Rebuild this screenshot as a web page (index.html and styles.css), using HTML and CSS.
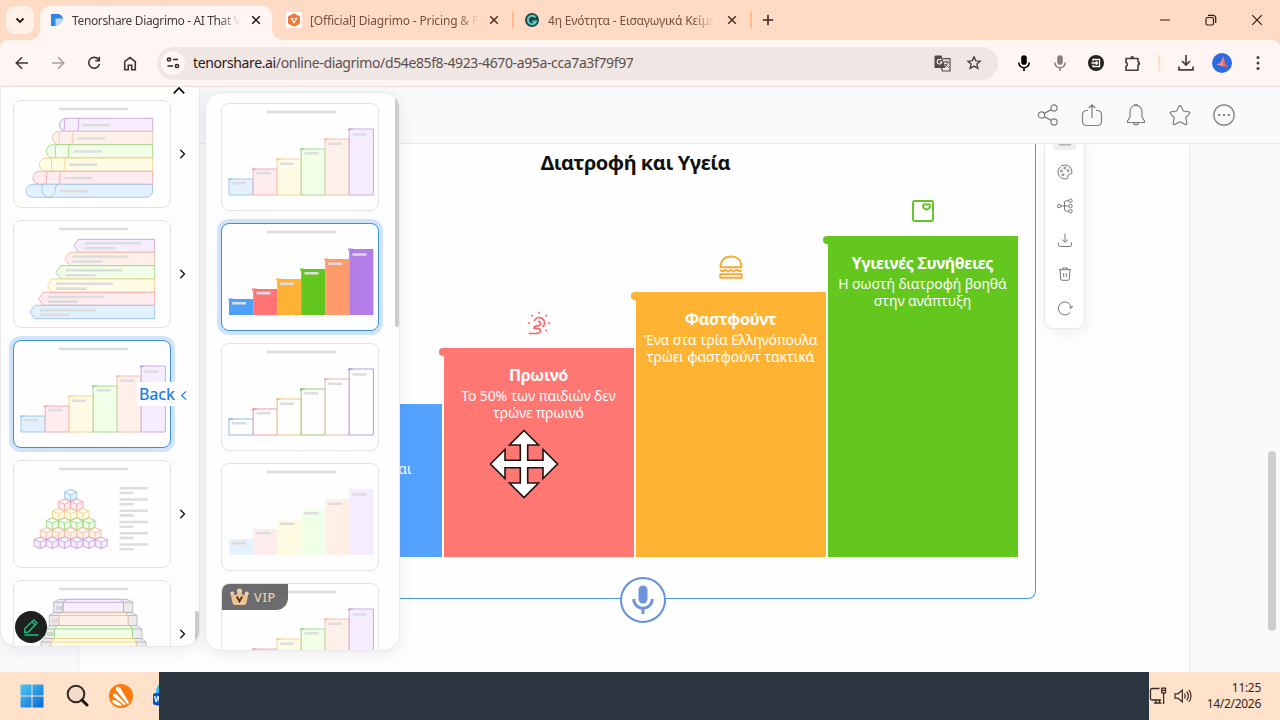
FILE: index.html
```html
<!DOCTYPE html>
<html lang="el">
<head>
<meta charset="utf-8">
<title>Tenorshare Diagrimo</title>
<link rel="stylesheet" href="styles.css">
</head>
<body>
<svg class="defs" width="0" height="0">
  <symbol id="close" viewBox="0 0 10 10"><path d="M1.2 1.2 8.8 8.8M8.8 1.2 1.2 8.8" fill="none" stroke="currentColor" stroke-width="1.5"/></symbol>
  <symbol id="mic" viewBox="0 0 16 20"><rect x="4.8" y="1" width="6.4" height="11" rx="3.2" fill="currentColor"/><path d="M2 9.5a6 6 0 0 0 12 0M8 15.5V19" fill="none" stroke="currentColor" stroke-width="1.8"/></symbol>
  <symbol id="chev" viewBox="0 0 8 12"><path d="M1.800 1.800 6 6 1.800 10.200" fill="none" stroke="currentColor" stroke-width="1.300"/></symbol>
  <symbol id="stairs" viewBox="0 0 158 108">
    <path class="line" d="M46 9h69"/>
    <g transform="translate(0 .5)">
    <path class="c1" d="M8 75.5h24.2V91.5H8z"/><path class="c2" d="M32.2 65.5h24V91.5h-24z"/><path class="c3" d="M56.2 55.5h24V91.5h-24z"/>
    <path class="c4" d="M80.2 45.5h24V91.5h-24z"/><path class="c5" d="M104.2 35.5h24V91.5h-24z"/><path class="c6" d="M128.2 25.5h24.2V91.5h-24.2z"/>
    <path class="n1" d="M8 76.5v-1h4"/><path class="n2" d="M31.6 67v-1.5h4"/><path class="n3" d="M55.6 57v-1.5h4"/><path class="n4" d="M79.6 47v-1.5h4"/><path class="n5" d="M103.6 37v-1.5h4"/><path class="n6" d="M127.6 27v-1.5h4"/>
    <path class="line" d="M11 79.8h14M35.5 69.6h14M59 60.2h14M83.5 49.8h14M107 40.2h14M131.5 31h14"/>
    </g>
  </symbol>
  <symbol id="cube" viewBox="0 0 12.4 12.2" overflow="visible"><path d="M6.2.3 12.2 3v6.4l-6 2.6-6-2.6V3zM.2 3l6 2.6 6-2.6M6.2 5.6V12"/></symbol>
</svg>

<div class="tabs">
  <div class="tabsearch"><svg width="10" height="7" viewBox="0 0 10 7"><path d="M1.5 1.5 5 5l3.500-3.500" fill="none" stroke="#1f1713" stroke-width="1.8"/></svg></div>
  <div class="tab active">
    <svg class="fav" width="14" height="14" viewBox="0 0 14 14"><path d="M1 1h6.500c3.500 0 5.500 2.500 5.500 5.500L6.500 13H1z" fill="#2f86e8"/><path d="M5.500 5.500h7.400C12.500 10 10 12.500 5.500 13z" fill="#bcdcff"/></svg>
    <span class="tabname">Tenorshare Diagrimo - AI That V</span>
    <svg class="x" width="10" height="10"><use href="#close"/></svg>
  </div>
  <div class="tab second">
    <svg class="fav" width="16" height="16" viewBox="0 0 16 16"><path d="M0 0h16v16H0z" fill="#fff"/><path d="m8 1.300 6 3.300v6.800l-6 3.300-6-3.300V4.600z" fill="#f07a35"/><path d="M4.500 6h7L8 12z" fill="#fff"/><circle cx="8" cy="7.600" r="1.300" fill="#f07a35"/></svg>
    <span class="tabname">[Official] Diagrimo - Pricing &amp; P</span>
    <svg class="x" width="10" height="10"><use href="#close"/></svg>
  </div>
  <div class="tab third">
    <svg class="fav" width="14" height="14" viewBox="0 0 14 14"><circle cx="7" cy="7" r="7" fill="#174a4a"/><path d="M10.500 4.500A4.200 4.200 0 1 0 11 8.500H7.500" fill="none" stroke="#69c9ba" stroke-width="2"/></svg>
    <span class="tabname">4η Ενότητα - Εισαγωγικά Κείμε</span>
    <svg class="x" width="10" height="10"><use href="#close"/></svg>
  </div>
  <div class="newtab"><svg width="12" height="12" viewBox="0 0 12 12"><path d="M6 .8v10.400M.8 6h10.400" stroke="#3b2a20" stroke-width="1.600"/></svg></div>
  <div class="winctl">
    <svg width="46" height="20" viewBox="0 0 46 20"><path d="M18 10h10" stroke="#2a1d16"/></svg>
    <svg width="46" height="20" viewBox="0 0 46 20"><g fill="none" stroke="#2a1d16" stroke-width="1.200"><rect x="18" y="7.500" width="7.500" height="7.500" rx="1.500"/><path d="M20 5.400h5.200a2.500 2.500 0 0 1 2.500 2.500V13"/></g></svg>
    <svg width="46" height="20" viewBox="0 0 46 20"><path d="m18.200 5.200 9.600 9.600m0-9.600-9.600 9.600" stroke="#2a1d16" stroke-width="1.200"/></svg>
  </div>
</div>

<div class="toolbar">
  <div class="btn"><svg width="14" height="14" viewBox="0 0 14 14"><path d="M13 7H1.500M7 1.300 1.300 7 7 12.700" fill="none" stroke="#433631" stroke-width="1.600"/></svg></div>
  <div class="btn"><svg width="14" height="14" viewBox="0 0 14 14"><path d="M1 7h11.500M7 1.300 12.700 7 7 12.700" fill="none" stroke="#aba19e" stroke-width="1.600"/></svg></div>
  <div class="btn"><svg width="14" height="14" viewBox="0 0 14 14"><path d="M11.800 4A5.400 5.400 0 1 0 12.400 8M12.300.8v4H8.200" fill="none" stroke="#433631" stroke-width="1.600"/></svg></div>
  <div class="btn"><svg width="14" height="15" viewBox="0 0 14 15"><path d="M1.700 5.700 7 1.600l5.300 4.100v8H8.700V9.200H5.300v4.500H1.700z" fill="none" stroke="#433631" stroke-width="1.600"/></svg></div>
  <div class="omnibox">
    <div class="site"><svg width="14" height="12" viewBox="0 0 14 12"><g fill="none" stroke="#2f2522" stroke-width="1.500"><circle cx="3" cy="2.500" r="1.600"/><path d="M7 2.500h5M1.500 9H7"/><circle cx="11" cy="9" r="1.600"/></g></svg></div>
    <div class="url"><b>tenorshare.ai</b>/online-diagrimo/d54e85f8-4923-4670-a95a-cca7a3f79f97</div>
    <div class="oi"><svg width="17" height="17" viewBox="0 0 17 17"><path d="M1.500.5h6l4 12.500h-10A1 1 0 0 1 .5 12V1.500a1 1 0 0 1 1-1z" fill="#54484a"/><path d="M7.500 5.200A2.400 2.400 0 1 0 7.900 7H5.700" fill="none" stroke="#fff" stroke-width="1.100"/><path d="M9 3.700h7V16H8.500L7.500 13" fill="none" stroke="#54484a" stroke-width="1.200"/><path d="M9.500 7h5.500M12.200 5.500V7M14 7c-.5 2.500-2 4-3.500 5M11 9l3.500 3.500" fill="none" stroke="#54484a"/></svg></div>
    <div class="oi"><svg width="16" height="16" viewBox="0 0 16 16"><path d="m8 1.800 1.800 4 4.400.4-3.300 2.900 1 4.300L8 11.100l-3.900 2.300 1-4.300-3.300-2.900 4.400-.4z" fill="none" stroke="#453a37" stroke-width="1.300"/></svg></div>
  </div>
  <div class="btn ext"><svg width="14" height="18"><use href="#mic"/></svg></div>
  <div class="btn ext dim"><svg width="14" height="18"><use href="#mic"/></svg></div>
  <div class="btn"><svg width="16" height="16" viewBox="0 0 16 16"><circle cx="8" cy="8" r="8" fill="#242122"/><path d="M5 6.300V4.500h6.500v7H5V9.700M3.500 8h5.700M7.800 6.300 9.500 8 7.800 9.700" fill="none" stroke="#fff" stroke-width="1.300"/></svg></div>
  <div class="btn"><svg width="17" height="17" viewBox="0 0 17 17"><path d="M2 3.500h12v3.200a1.900 1.900 0 0 1 0 3.600v5H2v-4a2 2 0 0 0 0-3.800z" fill="none" stroke="#4a3c37" stroke-width="1.600" stroke-linejoin="round"/><path d="M6.300 3a1.900 1.900 0 0 1 3.800 0zM14 6.500a2 2 0 0 1 0 4z" fill="#4a3c37"/></svg></div>
  <div class="vsep"></div>
  <div class="btn"><svg width="16" height="16" viewBox="0 0 16 16"><path d="M8 0v10M4 6l4 4 4-4M1 11.500v3.300h14v-3.300" fill="none" stroke="#4a3c37" stroke-width="1.700"/></svg></div>
  <div class="btn"><svg width="20" height="20" viewBox="0 0 20 20"><circle cx="10" cy="10" r="10" fill="#2b6be4"/><path d="M11.500 3.500 13.500 11l3 3.500-5.500-1.200-6.500-1.800 4-1.500z" fill="#f0645c"/><path d="M11.500 3.500 11 13.300 4.500 11.500l4-1.500z" fill="#ff8d78"/></svg></div>
  <div class="btn"><svg width="4" height="16" viewBox="0 0 4 16"><g fill="#4a3c37"><circle cx="2" cy="2.500" r="1.500"/><circle cx="2" cy="8" r="1.500"/><circle cx="2" cy="13.500" r="1.500"/></g></svg></div>
</div>

<div class="content">
  <div class="apphead">
    <svg viewBox="0 0 22 22"><circle cx="4.500" cy="11" r="3.100"/><circle cx="17" cy="4" r="3.100"/><circle cx="17" cy="18" r="3.100"/><path d="m7.200 9.400 7-3.800M7.200 12.600l7 3.800"/></svg>
    <svg viewBox="0 0 22 22"><path d="M7 6.500H5.500A4 4 0 0 0 1.500 10.500v7a4 4 0 0 0 4 4h11a4 4 0 0 0 4-4v-7a4 4 0 0 0-4-4H15M11 14V.8M7.800 4 11 .8 14.200 4"/></svg>
    <svg viewBox="0 0 22 22"><path d="M11 1.500c-4 0-6 3-6 6.500v5L2.500 17v1.500h17V17L17 13V8c0-3.500-2-6.500-6-6.500zM8.500 19a2.600 2.600 0 0 0 5 0M9.500 1.500a1.500 1.500 0 0 1 3 0"/></svg>
    <svg viewBox="0 0 22 22"><path d="M10 2.200a1.100 1.100 0 0 1 2 0L14.300 7l5.600.8a1 1 0 0 1 .6 1.800L16.800 13.500l1 5.800a1 1 0 0 1-1.600 1.100L11 17.800l-5.200 2.600a1 1 0 0 1-1.600-1.100l1-5.800L1.500 9.600a1 1 0 0 1 .6-1.800L7.700 7z" stroke-linejoin="round"/></svg>
    <svg viewBox="0 0 22 22"><circle cx="11" cy="11" r="10.200"/><path d="M5.200 11h2M10 11h2M14.800 11h2" stroke-width="1.800"/></svg>
  </div>
  <div class="stage">
    <div class="paper">
      <div class="frame">
        <h1>Διατροφή και Υγεία</h1>
        <div class="chart">
          <div class="col"><div class="bar b1"><p class="cut">Η διατροφή είναι</p></div></div>
          <div class="col">
            <svg class="ico i2" viewBox="0 0 24 24"><path d="M7.200 10.200A5.300 5.300 0 1 1 15.500 16M12 2.800V.8M5.500 5.300 4.200 4M18.500 5.300 19.800 4M3 12H.8M21 12h2.200M18.500 18.700l1.300 1.300M1.500 22.500h7c4 0 5-1.300 5-2.700 0-2.300-2-2.500-4-2.500H7c.2-2 1.500-2.500 3.500-2.500 2.200 0 3-.8 3-2.300 0-1.300-1-2.200-2.500-2"/></svg>
            <div class="bar b2"><h2>Πρωινό</h2><p>Το 50% των παιδιών δεν<br>τρώνε πρωινό</p></div>
          </div>
          <div class="col">
            <svg class="ico i3" viewBox="0 0 24 24"><path d="M1.500 12.200C1.500 5.500 5.500 1.500 12 1.500s10.500 4 10.500 10.700zM1 15.500l3 .7 2.500-1.400 2.700 1.900 2.800-1.900 2.800 1.900 2.700-1.900 2.500 1.400 3-.7M1.300 19.300h21.400v3.500H1.300z"/></svg>
            <div class="bar b3"><h2>Φαστφούντ</h2><p>Ένα στα τρία Ελληνόπουλα<br>τρώει φαστφούντ τακτικά</p></div>
          </div>
          <div class="col">
            <svg class="ico i4" viewBox="0 0 24 24"><rect x="2" y="2" width="20" height="20" rx="1.500"/><path d="M12 7c0-2.200 2.300-2 3.500-1.200C16.700 5 19 4.800 19 7c0 2-2 3.200-3.500 3.700C14 10.200 12 9 12 7z"/></svg>
            <div class="bar b4"><h2>Υγιεινές Συνήθειες</h2><p>Η σωστή διατροφή βοηθά<br>στην ανάπτυξη</p></div>
          </div>
        </div>
        <div class="voice"><svg width="24" height="32" viewBox="0 0 24 32"><rect x="7.500" y="1.500" width="9" height="18" rx="4.500" fill="#6c93dc"/><path d="M2.700 15a9.300 9.300 0 0 0 18.600 0M12 24.500V30" fill="none" stroke="#6c93dc" stroke-width="2.900"/></svg></div>
      </div>
      <div class="side">
        <div class="sel"></div>
        <svg viewBox="0 0 16 16"><path d="M15 8A7 7 0 1 0 10 14.700c1.500-.5.500-2.500.8-3.500.5-1.500 4.200-.2 4.200-3.200z"/><circle cx="7.800" cy="4" r="1"/><circle cx="4.500" cy="7" r="1"/><circle cx="11.200" cy="6.500" r="1"/><circle cx="6" cy="10.800" r="1"/></svg>
        <svg viewBox="0 0 16 16"><circle cx="2.200" cy="8" r="1.700"/><circle cx="13.500" cy="2.800" r="1.700"/><circle cx="13.500" cy="8" r="1.700"/><circle cx="13.500" cy="13.200" r="1.700"/><path d="M4 8h7.800M11.800 2.800H9.500A2 2 0 0 0 7.500 5v6a2 2 0 0 0 2 2.200h2.300"/></svg>
        <svg viewBox="0 0 16 16"><path d="M8 1.500v8.700M5 7.500l3 2.800 3-2.800M1.500 10.500v2a2 2 0 0 0 2 2h9a2 2 0 0 0 2-2v-2"/></svg>
        <svg viewBox="0 0 16 16"><path d="M2 3.700h12M5 3.700 5.800 2h4.400l.8 1.700M3 3.700l.7 9.300a1.500 1.500 0 0 0 1.500 1.300h5.600a1.500 1.500 0 0 0 1.500-1.300L13 3.700M6.700 7v4M9.300 7v4"/></svg>
        <svg viewBox="0 0 16 16"><path d="M13.300 12A6.500 6.500 0 1 1 14.300 7.500M12 7l2.400 1.300L15.500 6"/></svg>
      </div>
    </div>
  </div>

  <div class="pagescroll"></div>

  <div class="panel left">
    <svg class="up" width="14" height="9" viewBox="0 0 14 9"><path d="M1.800 7.300 7 2l5.200 5.300" fill="none" stroke="#000" stroke-width="1.700"/></svg>
    <div class="row">
      <div class="card"><svg viewBox="0 0 158 108" class="pastel">
        <path class="line" d="M46 9h69"/>
        <path class="c6" d="M53 18.300h86.700v13H53a6.500 6.500 0 0 1 0-13zM53 18.300q-1.500 1-1.500 4v5q0 3-2 4M66.500 18.300q-1 1-1 4v5q0 3-1.500 4"/>
        <path class="c5" d="M46 31.300h93.700v13.400H46a6.700 6.700 0 0 1 0-13.400zM47.800 31.300q-1.500 1-1.500 4v5q0 3 1.500 4.400M61.500 31.300q-1.500 1-1.500 4v5q0 3-2 4.400"/>
        <path class="c4" d="M40 44.700h99.700V58H40a6.650 6.650 0 0 1 0-13.300zM44 44.700q-1.700 1-1.700 4v5q0 3 1.500 4.300M57 44.700q-1.300 1-1.300 4v5q0 3-2 4.300"/>
        <path class="c3" d="M33 58h106.700v13.300H33A6.650 6.650 0 0 1 33 58zM36.500 58q2 1 2 4v5q0 3-2 4.300M53 58q-1.300 1-1.300 4v5q0 3-2 4.300"/>
        <path class="c2" d="M26.500 71.300h113.200v13H26.500a6.500 6.500 0 0 1 0-13zM35 71.300q-1.500 1-1.500 4v5q0 3-2 4M48.500 71.300q-1.500 1-1.500 4v5q0 3-2 4"/>
        <path class="c1" d="M19.500 84.300h120.200v6.500a6.500 6.500 0 0 1-6.500 6.500H19.500a6.500 6.500 0 0 1 0-13z"/>
        <path class="c1 open" d="M29.500 84.300c-2.500 7 1.500 13 6 13s8-5.500 6.700-10.500l3-2.500"/>
        <path class="line" d="M69 25.200h28M64.500 38.500h28M61 51.500h28M56 64.800h28M51.500 78h28M47 91.200h28"/>
      </svg></div>
      <svg class="go"><use href="#chev"/></svg>
    </div>
    <div class="row">
      <div class="card"><svg viewBox="0 0 158 108" class="pastel">
        <path class="line" d="M46 9h69"/>
        <path class="c6" d="M141.700 19.300H65.500L61 26l4.500 6.300h76.200z"/><path class="c5" d="M141.700 32.300H56.500L52 39l4.500 6.700h85.200z"/><path class="c4" d="M141.700 45.700H48L43 52.300l5 6.700h93.700z"/>
        <path class="c3" d="M141.700 59H38.800l-4.500 6.600 4.500 6.700h102.900z"/><path class="c2" d="M141.700 72.300H30.200L25.700 79l4.500 6.300h111.500z"/><path class="c1" d="M141.700 85.300H21.500L17 92l4.500 6.700h120.200z"/>
        <path class="line" d="M71.700 23.300h56.500M71.700 28.200h30M59.300 36.700h56.500M59.300 41.500h30M52.700 50.300h56.500M52.700 55.200h30M43.300 63.800h56.500M43.300 68.600h30M35 77h56M35 81.600h30M26.700 90.200h56M26.700 95h30"/>
      </svg></div>
      <svg class="go"><use href="#chev"/></svg>
    </div>
    <div class="row">
      <div class="card on"><svg viewBox="0 0 158 108" class="pastel"><use href="#stairs"/></svg></div>
      <div class="back">Back<svg width="8" height="11" viewBox="0 0 8 12"><path d="M6.300 1.500 1.500 6l4.800 4.500" fill="none" stroke="#1c7ee0" stroke-width="1.300"/></svg></div>
    </div>
    <div class="row">
      <div class="card"><svg viewBox="0 0 158 108" class="pastel">
        <path class="line" d="M46 9h69"/>
        <g class="c1"><use href="#cube" x="51.500" y="29" width="12.400" height="12.200"/></g>
        <g class="c2"><use href="#cube" x="45.400" y="38.600" width="12.400" height="12.200"/><use href="#cube" x="57.600" y="38.600" width="12.400" height="12.200"/></g>
        <g class="c3"><use href="#cube" x="39.300" y="48.100" width="12.400" height="12.200"/><use href="#cube" x="51.500" y="48.100" width="12.400" height="12.200"/><use href="#cube" x="63.700" y="48.100" width="12.400" height="12.200"/></g>
        <g class="c4"><use href="#cube" x="33.200" y="57.600" width="12.400" height="12.200"/><use href="#cube" x="45.400" y="57.600" width="12.400" height="12.200"/><use href="#cube" x="57.600" y="57.600" width="12.400" height="12.200"/><use href="#cube" x="69.800" y="57.600" width="12.400" height="12.200"/></g>
        <g class="c5"><use href="#cube" x="27.100" y="67.100" width="12.400" height="12.200"/><use href="#cube" x="39.300" y="67.100" width="12.400" height="12.200"/><use href="#cube" x="51.500" y="67.100" width="12.400" height="12.200"/><use href="#cube" x="63.700" y="67.100" width="12.400" height="12.200"/><use href="#cube" x="75.900" y="67.100" width="12.400" height="12.200"/></g>
        <g class="c6"><use href="#cube" x="21" y="76.600" width="12.400" height="12.200"/><use href="#cube" x="33.200" y="76.600" width="12.400" height="12.200"/><use href="#cube" x="45.400" y="76.600" width="12.400" height="12.200"/><use href="#cube" x="57.600" y="76.600" width="12.400" height="12.200"/><use href="#cube" x="69.800" y="76.600" width="12.400" height="12.200"/><use href="#cube" x="82" y="76.600" width="12.400" height="12.200"/></g>
        <path class="line" d="M106.500 28.300H135M106.500 33h14M106.500 39.500H135M106.500 44.200h14M106.500 50.700H135M106.500 55.400h14M106.500 62H135M106.500 66.700h14M106.500 73.200H135M106.500 77.900h14M106.500 84.500H135M106.500 89.200h14"/>
      </svg></div>
      <svg class="go"><use href="#chev"/></svg>
    </div>
    <div class="row">
      <div class="card"><svg viewBox="0 0 158 108" class="pastel">
        <path class="line" d="M46 9h69"/>
        <g fill="#ececee" stroke="#aaa" stroke-width=".7">
          <path d="M40.700 22.300 46 19.300h68l5.700 3v10H110V22.300M40.700 22.300v10h9.600v-10zM110 22.300h9.700M110 22.300l-3-3M50.300 22.300l3-3"/>
          <path d="M36.300 35.500 41 32.500h78l5 3v10H115V35.500M36.300 35.500v10h9.600v-10zM115 35.500h9M115 35.500l-3-3"/>
          <path d="M32 49l5-3.500h87l5 3.500v9.500h-9.500V49M32 49v9.500h9.500V49zM119.500 49h9.500M119.500 49l-3-3.500"/>
          <path d="M28 62l4-3.500h97l4 3.500v10H28zM28 62h105M38 62v8M123 62v8"/>
        </g>
        <path class="c6" d="M50.300 22.300l3-3h54l3.200 3v10H50.300zM50.300 22.300h60"/><path class="c5" d="M46 35.500l3-3h63l3 3v10H46zM46 35.500h69"/><path class="c4" d="M41.500 49l3-3.500h72l3 3.500v9.500h-78zM41.500 49h78"/><path class="c3" d="M38 62l3-3.500h79l3 3.500v10H38zM38 62h85"/>
        <g font-family="Noto Sans" font-size="5.500" fill="#a9a6c9"><text x="43" y="29.500">06</text><text x="38.500" y="43" fill="#d6b8a4">05</text><text x="34" y="56" fill="#8dbb7c">04</text></g>
      </svg></div>
      <svg class="go"><use href="#chev"/></svg>
    </div>
    <div class="thumb"></div>
    <div class="pen"><svg width="18" height="18" viewBox="0 0 18 18"><path d="M2.500 14.500l.5-4L11.800 2l3.200 3-8.700 9zM10 3.800l3.200 3M2.500 17h14" fill="none" stroke="#1dbf7c" stroke-width="1.400" stroke-linejoin="round"/></svg></div>
  </div>

  <div class="panel right">
    <div class="card"><svg viewBox="0 0 158 108" class="pastel"><use href="#stairs"/></svg></div>
    <div class="card on"><svg viewBox="0 0 158 108" class="solid"><use href="#stairs"/></svg></div>
    <div class="card"><svg viewBox="0 0 158 108" class="outline"><use href="#stairs"/></svg></div>
    <div class="card"><svg viewBox="0 0 158 108" class="tint"><use href="#stairs"/></svg></div>
    <div class="card"><svg viewBox="0 0 158 108" class="pastel"><use href="#stairs"/></svg>
      <div class="vip"><svg width="19" height="18" viewBox="0 0 19 18"><circle cx="9.500" cy="3" r="2.600" fill="#f0d0a4"/><circle cx="2.300" cy="5.500" r="2" fill="#f0d0a4"/><circle cx="16.700" cy="5.500" r="2" fill="#f0d0a4"/><path d="M.8 6.500 6 7l3.500-4L13 7l5.200-.5L16.500 15q-.5 2-2.500 2H5q-2 0-2.500-2z" fill="#edc393"/><path d="m6.800 8.500 2.700 4.700 2.700-4.700" fill="none" stroke="#5c371a" stroke-width="2"/></svg>VIP</div>
    </div>
    <div class="thumb"></div>
  </div>

  <svg class="cursor" width="70" height="70" viewBox="0 0 70 70"><path d="M35 1.500 49.500 16H38.700v15.300H54V20.500L68.500 35 54 49.500V38.700H38.700V54H49.500L35 68.500 20.500 54h10.800V38.700H16v10.800L1.500 35 16 20.500v10.800h15.300V16H20.500z" fill="#fff" stroke="#1c1413" stroke-width="1.600"/></svg>
</div>

<div class="taskbar">
  <div class="start"><svg width="24" height="24" viewBox="0 0 24 24"><defs><linearGradient id="wg" x1="0" y1="0" x2="1" y2="1"><stop offset="0" stop-color="#4cc8f8"/><stop offset="1" stop-color="#0868d0"/></linearGradient></defs><path d="M.5.500h11v11H.5zM12.500.500h11v11h-11zM.5 12.500h11v11H.5zM12.500 12.500h11v11h-11z" fill="url(#wg)"/></svg></div>
  <div class="search"><svg width="24" height="24" viewBox="0 0 24 24"><circle cx="10" cy="10" r="8.300" fill="#f3ddca" stroke="#33281f" stroke-width="2"/><path d="m16 16 5 5" stroke="#1d1712" stroke-width="3" stroke-linecap="round"/></svg></div>
  <div class="avast"><svg width="24" height="24" viewBox="0 0 24 24"><circle cx="12" cy="12" r="12" fill="#ff7a0a"/><path d="M7.500 3.200c2.500-1.200 4 .5 5 2.800L20 18.800l-1.500 1.500L8 7C6.800 5.500 6.500 4 7.500 3.200zM4.500 10c1.500-1 3 0 4 1.200l8.500 9-2 .8L5 13c-1-.8-1.500-2-.5-3zM3 17.200c1-1.500 3-1.200 4.500-.5l6 4.800c-4 .8-8.500-.8-10.500-4.300z" fill="#fff"/></svg></div>
  <div class="word"><svg width="24" height="24" viewBox="0 0 24 24"><path d="M5 1h17v21H3V6z" fill="#43bdf0"/><rect y="9" width="13" height="12" rx="2" fill="#174fb8"/><text x="1" y="18.200" font-family="Open Sans" font-weight="700" font-size="8" fill="#fff">W</text></svg></div>
  <div class="dark"></div>
  <div class="tray">
    <svg width="18" height="18" viewBox="0 0 18 18"><path d="M10.500 1.500H3A1.500 1.500 0 0 0 1.500 3v8.500A1.500 1.500 0 0 0 3 13h9M5 16h7.500M7 13v3M10.500 13v3M12.700 1.200h3.800v4.600h-3.800zM14.600 5.800V17M12.700 3.300h3.800" fill="none" stroke="#382c22" stroke-width="1.300"/></svg>
    <svg width="18" height="16" viewBox="0 0 18 16"><path d="M1 5.800h3L8.300 2v12L4 10.200H1zM10.500 5.500q1.500 2.500 0 5M12.800 3.700q3 4.300 0 8.600M15 2q4 6 0 12" fill="none" stroke="#382c22" stroke-width="1.200"/></svg>
    <div class="clock">11:25<br>14/2/2026</div>
  </div>
</div>
</body>
</html>
```
FILE: styles.css
```css
* { box-sizing: border-box; }
body { margin: 0; width: 1280px; height: 720px; overflow: hidden; display: flex; flex-direction: column; background: #ffdac4; font-family: "Noto Sans", "Open Sans", sans-serif; color: #1f1f1f; }
svg { display: block; flex: none; }
.defs { position: absolute; }

/* tab strip */
.tabs { flex: none; height: 40px; display: flex; align-items: center; padding: 0 0 0 6px; background: #ffdac5; }
.tabsearch { width: 28px; height: 28px; margin-right: 6px; border-radius: 9px; background: #fff0e8; display: grid; place-items: center; }
.tab { display: flex; align-items: center; height: 34px; font-size: 12px; color: #74503f; position: relative; }
.tab .tabname { white-space: nowrap; -webkit-mask-image: linear-gradient(90deg, #000 calc(100% - 22px), transparent); mask-image: linear-gradient(90deg, #000 calc(100% - 22px), transparent); letter-spacing: -.3px; }
.tab .x { margin-left: auto; margin-right: 15px; color: #4a3023; }
.tab.active { width: 232px; margin-top: 6px; padding: 0 0 6px 10px; background: #fff6f3; border-radius: 10px 10px 0 0; color: #463b37; }
.tab.active::before, .tab.active::after { content: ""; position: absolute; bottom: 0; width: 10px; height: 10px; }
.tab.active::before { left: -10px; background: radial-gradient(circle at 0 0, transparent 9.500px, #fff6f3 10px); }
.tab.active::after { right: -10px; background: radial-gradient(circle at 100% 0, transparent 9.500px, #fff6f3 10px); }
.tab.active .fav { margin-right: 8px; }
.tab.active .x { margin-right: 11px; color: #1e1512; }
.tab.active .tabname { letter-spacing: -.36px; }
.tab.second { width: 242px; padding-left: 14px; }
.tab.second .tabname { letter-spacing: -.16px; }
.tab.second .fav { margin-right: 8px; }
.tab.third { width: 238px; padding-left: 11px; }
.tab.third .tabname { letter-spacing: -.16px; }
.tab.third .fav { margin-right: 9px; }
.tab.second::after, .tab.third::after { content: ""; position: absolute; right: 0; top: 9px; width: 2px; height: 16px; background: #fcba8d; }
.newtab { width: 32px; display: grid; place-items: center; }
.winctl { margin-left: auto; display: flex; }

/* toolbar */
.toolbar { flex: none; height: 47px; display: flex; align-items: center; padding: 0 4px 0 4px; background: #fff6f3; border-bottom: 1px solid #ecdcd7; border-radius: 8px 8px 0 0; }
.btn { width: 36px; height: 32px; flex: none; display: grid; place-items: center; }
.ext { color: #000; }
.ext.dim { color: #85807f; }
.omnibox { width: 841px; height: 33px; margin: 0 8px 0 9px; padding: 0 8px 0 4px; display: flex; align-items: center; border-radius: 17px; background: #f0e6e4; }
.site { width: 24px; height: 24px; border-radius: 50%; background: #fff7f4; display: grid; place-items: center; }
.url { flex: 1; margin-left: 8px; margin-top: -1px; font-size: 14px; letter-spacing: -.375px; color: #5c504d; white-space: nowrap; }
.url b { font-weight: 400; color: #29201e; }
.oi { width: 32px; display: grid; place-items: center; }
.vsep { width: 2px; height: 16px; margin: 0 8px; background: #fcdfce; }

/* application */
.content { position: relative; height: 585px; flex: none; background: #f8fafc; overflow: hidden; }
.apphead { height: 57px; display: flex; justify-content: flex-end; align-items: center; gap: 22px; padding-right: 45px; background: #f9fafc; border-bottom: 1px solid #e8eaee; }
.apphead svg { width: 22px; height: 22px; fill: none; stroke: #7c7e83; stroke-width: 1.200; }
.stage { height: 528px; overflow: hidden; padding-left: 80px; }
.paper { width: 1110px; height: 528px; background: #fefefe; border-right: 1px solid #eceef1; box-shadow: 0 0 6px rgba(60,70,90,.06); display: flex; align-items: flex-start; }
.frame { position: relative; width: 801px; height: 455px; margin-left: 155px; border: solid #4b9ae4; border-width: 0 1.500px 1.500px; border-radius: 0 0 8px 8px; display: flex; flex-direction: column; justify-content: space-between; padding-bottom: 41.500px; }
h1 { margin: 5px 0 0; font-size: 20px; line-height: 27px; font-weight: 700; text-align: center; color: #111; letter-spacing: -.45px; }
.chart { display: flex; align-items: flex-end; gap: 2px; margin-left: 15.500px; }
.col { width: 190px; display: flex; flex-direction: column; align-items: center; }
.ico { width: 24px; height: 24px; margin-bottom: 13px; fill: none; stroke-width: 1.900; }
.i2 { stroke: #f8696b; stroke-width: 1.700; } .i3 { stroke: #f6ab35; } .i4 { stroke: #62c325; }
.bar { position: relative; width: 190px; padding-top: 16px; text-align: center; color: #fff; background: var(--c); }
.bar::before { content: ""; position: absolute; left: -5px; top: 0; width: 9px; height: 8px; border-radius: 4px 0 0 4px; background: var(--c); }
.b1 { --c: #54a3ff; height: 153px; } .b2 { --c: #ff7773; height: 209px; } .b3 { --c: #ffb332; height: 265px; } .b4 { --c: #64c71e; height: 321px; }
.bar h2 { margin: 0; font-size: 16px; line-height: 22px; font-weight: 700; letter-spacing: -.3px; }
.bar p { margin: 1px 0 0; font-size: 14px; line-height: 17.600px; letter-spacing: -.12px; white-space: nowrap; }
.bar .cut { text-align: right; padding-right: 30px; margin-top: 40px; }
.voice { position: absolute; left: 384px; bottom: -25px; width: 46px; height: 46px; border-radius: 50%; border: 2px solid #6490dc; background: #fefefe; display: grid; place-items: center; }
.side { width: 41px; height: 185px; margin-left: 8px; background: #fff; border: 1px solid #e9eaed; border-top: 0; border-radius: 0 0 9px 9px; box-shadow: 2px 3px 14px rgba(60,70,90,.08); display: flex; flex-direction: column; align-items: center; gap: 18px; }
.side svg { width: 16px; height: 16px; fill: none; stroke: #75777b; stroke-width: 1; }
.sel { width: 23px; height: 6px; margin-bottom: -4px; background: linear-gradient(#b2b4b8, #b2b4b8) center top / 12px 1.500px no-repeat #efeff1; border-radius: 0 0 3px 3px; }
.pagescroll { position: absolute; left: 1268px; top: 364px; width: 8px; height: 180px; border-radius: 4px; background: #cdced0; }

/* floating template panels */
.panel { position: absolute; overflow: hidden; background: #fdfdfe; border: 1px solid #e8e9ec; display: flex; flex-direction: column; gap: 12px; box-shadow: 0 3px 16px rgba(50,60,80,.09); }
.panel.left { left: 0; top: 0; width: 200px; height: 560px; padding: 13px 0 0 12px; border-radius: 0 0 16px 16px; border-top: 0; }
.panel.right { left: 205px; top: 5px; width: 195px; height: 559px; padding: 10px 0 0 15px; border-radius: 16px; }
.up { position: absolute; left: 171px; top: -1px; }
.row { flex: none; position: relative; display: flex; align-items: center; gap: 7px; }
.go { width: 9px; height: 12px; color: #111; }
.card { flex: none; position: relative; width: 158px; height: 108px; border: 1px solid #e3e4e9; border-radius: 8px; background: #fefefe; overflow: hidden; }
.card > svg { width: 158px; height: 108px; margin: -1px; }
.card.on { border-color: #3f8edb; box-shadow: 0 0 0 4px #cfe4fb; }
.back { position: absolute; left: 124px; top: 42px; height: 24px; padding-left: 2px; width: 53px; display: flex; align-items: center; gap: 5px; font-size: 16px; font-weight: 500; letter-spacing: -.15px; color: #1c7ee0; background: linear-gradient(90deg, #fff 38px, transparent 38px); white-space: nowrap; }
.back svg { margin-top: 3px; }
.thumb { position: absolute; background: #cccdcf; border-radius: 3px; }
.left .thumb { right: 0; top: 524px; width: 4px; height: 30px; }
.right .thumb { right: 0; top: 3px; width: 4px; height: 231px; }
.pen { position: absolute; left: 14px; top: 524px; width: 32px; height: 32px; border-radius: 50%; background: #1f2121; display: grid; place-items: center; }
.vip { position: absolute; left: 0; top: 0; width: 66px; height: 26px; padding-left: 8px; display: flex; align-items: center; gap: 5px; background: rgba(84,84,87,.86); border-radius: 0 0 12px 0; color: #e9cfa6; font-size: 12.500px; font-weight: 500; letter-spacing: .7px; }

/* miniature diagram palettes */
.line { fill: none; stroke: #dddde0; stroke-width: 2.600; }
.pastel { --f1: #e3f1fe; --f2: #ffecee; --f3: #fffbe4; --f4: #f1ffe9; --f5: #fdf0e9; --f6: #f6eeff; --k1: #8fbdeb; --k2: #f19ca4; --k3: #f4cb81; --k4: #91cf78; --k5: #f2b799; --k6: #bd9be0; }
.solid { --f1: #4fa0fb; --f2: #ff7373; --f3: #ffb233; --f4: #63c61f; --f5: #ff9a6c; --f6: #b37de8; --k1: #fff; --k2: #fff; --k3: #fff; --k4: #fff; --k5: #fff; --k6: #fff; --n1: #4fa0fb; --n2: #ff7373; --n3: #ffb233; --n4: #63c61f; --n5: #ff9a6c; --n6: #b37de8; }
.outline { --f1: #fefefe; --f2: #fefefe; --f3: #fefefe; --f4: #fefefe; --f5: #fefefe; --f6: #fefefe; --k1: #6fa9ea; --k2: #ee868c; --k3: #f1b65c; --k4: #79c353; --k5: #f2a195; --k6: #a08bd6; }
.tint { --f1: #e6f1ff; --f2: #ffecec; --f3: #fffbe2; --f4: #f0ffe8; --f5: #fff0e6; --f6: #f6ecff; --k1: none; --k2: none; --k3: none; --k4: none; --k5: none; --k6: none; }
.c1 { fill: var(--f1); stroke: var(--k1); } .c2 { fill: var(--f2); stroke: var(--k2); } .c3 { fill: var(--f3); stroke: var(--k3); }
.c4 { fill: var(--f4); stroke: var(--k4); } .c5 { fill: var(--f5); stroke: var(--k5); } .c6 { fill: var(--f6); stroke: var(--k6); }
.c1, .c2, .c3, .c4, .c5, .c6 { stroke-width: .8; }
.open { fill: none; }
.n1, .n2, .n3, .n4, .n5, .n6 { fill: none; stroke-width: 1.200; }
.n1 { stroke: var(--n1, var(--k1)); } .n2 { stroke: var(--n2, var(--k2)); } .n3 { stroke: var(--n3, var(--k3)); }
.n4 { stroke: var(--n4, var(--k4)); } .n5 { stroke: var(--n5, var(--k5)); } .n6 { stroke: var(--n6, var(--k6)); }
.solid { --k1: none; --k2: none; --k3: none; --k4: none; --k5: none; --k6: none; }

.cursor { position: absolute; left: 488.500px; top: 342px; }

/* taskbar */
.taskbar { flex: none; height: 48px; display: flex; align-items: center; background: #ffe2c9; }
.start { margin-left: 20px; } .search { margin-left: 22px; } .avast { margin-left: 19px; }
.word { width: 6px; margin-left: 20px; overflow: hidden; }
.dark { width: 990px; height: 48px; background: #2c3640; }
.tray { flex: 1; display: flex; align-items: center; gap: 7px; padding-right: 19px; }
.clock { margin-left: auto; text-align: right; font-size: 12px; line-height: 16px; letter-spacing: -.3px; color: #33271e; }
```
